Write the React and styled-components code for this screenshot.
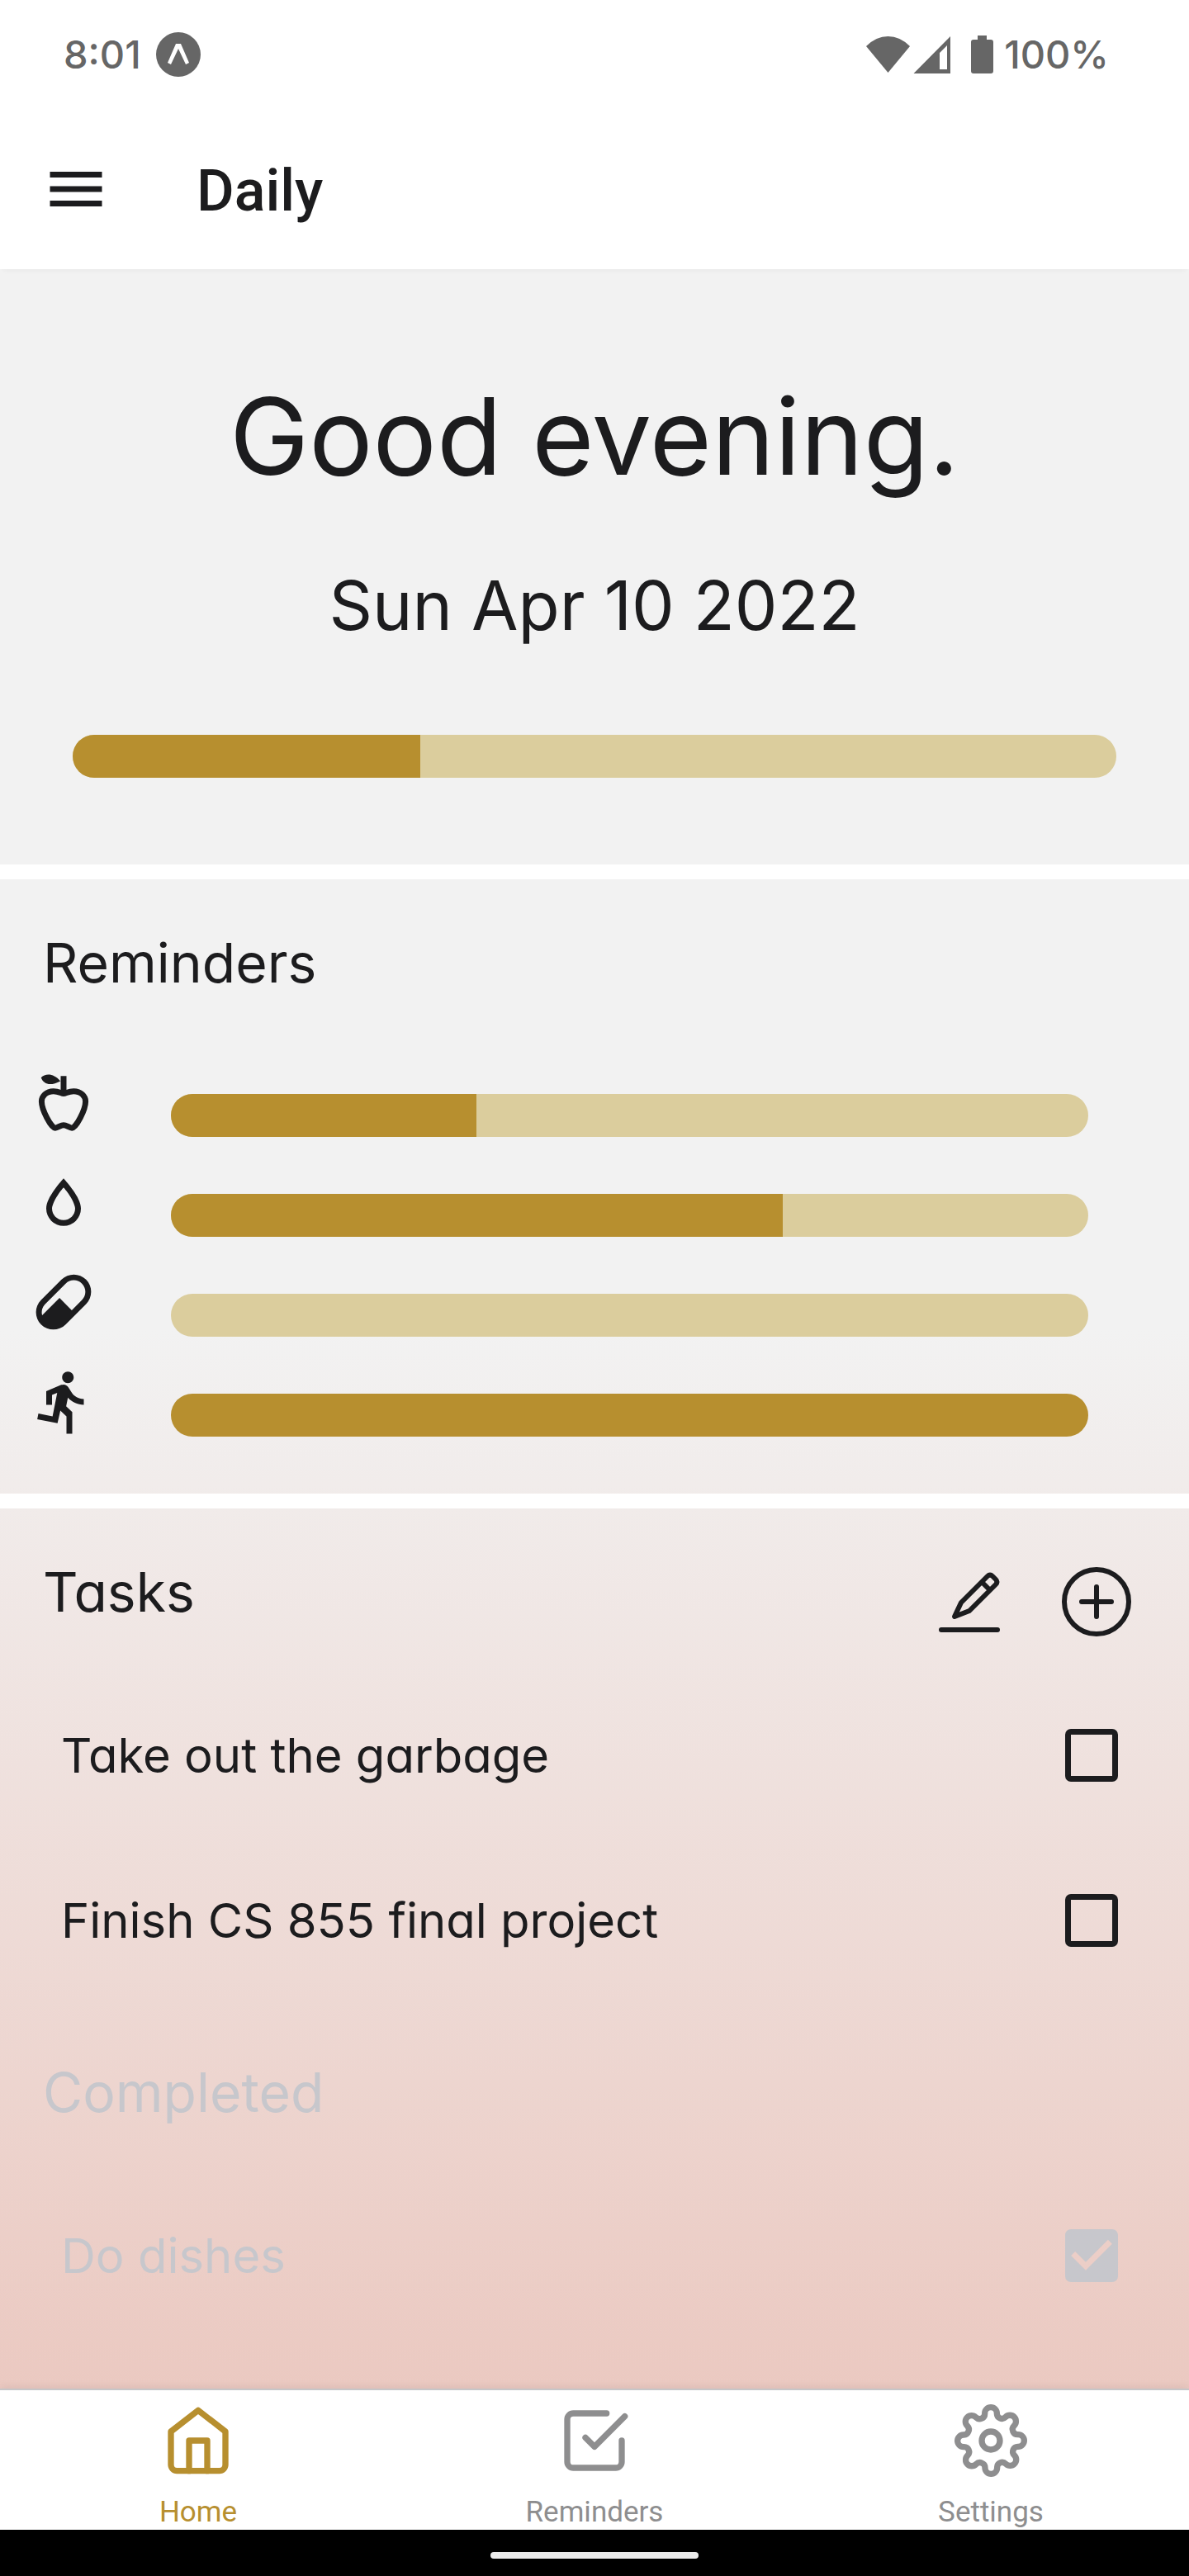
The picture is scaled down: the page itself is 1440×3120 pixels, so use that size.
import React, { useState } from "react";
import styled, { createGlobalStyle } from "styled-components";
import { FiHome, FiCheckSquare, FiSettings } from "react-icons/fi";

const ink = "#1c1c1e";
const gold = "#b78f2f";
const sand = "#dbcd9d";
const muted = "#c7c7cc";
const grey = "#8e8e8f";
const statusGrey = "#666666";

const GlobalStyle = createGlobalStyle`
  *, *::before, *::after { box-sizing: border-box; }
  body { margin: 0; background: #fff; }
  button, input { margin: 0; padding: 0; border: 0; background: none; font: inherit; color: inherit; }
  h1, h2, p, ul { margin: 0; padding: 0; font-weight: inherit; }
  ul { list-style: none; }
  svg { display: block; }
`;

const Screen = styled.div`
  display: flex;
  flex-direction: column;
  min-height: 100vh;
  color: ${ink};
  font-family: Inter, "Liberation Sans", sans-serif;
  font-weight: 400;
  font-feature-settings: "cv11";
`;

const StatusBar = styled.div`
  display: flex;
  align-items: center;
  justify-content: space-between;
  height: 132px;
  padding: 0 97px 0 77px;
  color: ${statusGrey};
  font-size: 47px;
  line-height: 56px;
  font-weight: 500;
`;

const StatusGroup = styled.div`
  display: flex;
  align-items: center;
  gap: ${(p) => p.$gap}px;
`;

const AppBar = styled.header`
  display: flex;
  align-items: center;
  gap: 104px;
  height: 194px;
  padding: 0 50px;
  z-index: 1;
  background: #fff;
  box-shadow: 0 6px 6px -4px rgba(0, 0, 0, 0.04);
`;

const IconButton = styled.button`
  display: block;
  width: 84px;
  height: 84px;
  cursor: pointer;
`;

const ScreenTitle = styled.h1`
  padding-top: 4px;
  font-family: Roboto, sans-serif;
  font-size: 70px;
  line-height: 84px;
  font-weight: 500;
`;

const Main = styled.main`
  display: flex;
  flex-direction: column;
  flex: 1;
  gap: 18px;
  background: linear-gradient(#f2f2f2 50%, #ebc9c1);
`;

const Divider = styled.hr`
  height: 18px;
  margin: -18px 0;
  border: 0;
  background: #fff;
`;

const Hero = styled.section`
  display: flex;
  flex-direction: column;
  align-items: center;
  padding: 122px 88px 105px;
`;

const Greeting = styled.h2`
  font-size: 129px;
  line-height: 160px;
`;

const Today = styled.p`
  margin: 76px 0 106px;
  font-size: 82px;
  line-height: 100px;
`;

const Track = styled.div`
  width: 100%;
  height: 52px;
  overflow: hidden;
  border-radius: 26px;
  background: ${sand};
`;

const Fill = styled.div`
  height: 100%;
  background: ${gold};
`;

const Section = styled.section`
  padding: 61px 0 ${(p) => p.$bottom}px;
`;

const SectionTitle = styled.h2`
  padding-left: 52px;
  font-size: 66px;
  line-height: 80px;
  color: ${(p) => (p.$muted ? muted : ink)};
`;

const ReminderList = styled.ul`
  display: flex;
  flex-direction: column;
  gap: 37px;
  padding: 87px 122px 0 35px;
`;

const ReminderRow = styled.li`
  display: flex;
  align-items: flex-end;
  gap: 88px;

  > svg { flex: none; }
`;

const TaskHeader = styled.div`
  display: flex;
  justify-content: space-between;
  padding-right: 70px;
`;

const Actions = styled.div`
  display: flex;
  gap: 70px;
  padding-top: 10px;
`;

const TaskList = styled.ul`
  padding-top: ${(p) => p.$top}px;
`;

const CompletedTitle = styled(SectionTitle)`
  padding-top: 68px;
`;

const TaskLabel = styled.label`
  display: flex;
  align-items: center;
  justify-content: space-between;
  height: 200px;
  padding: 0 86px 0 74px;
  font-size: 58px;
  line-height: 72px;
  color: ${(p) => (p.$done ? muted : ink)};
  cursor: pointer;
`;

const CheckCell = styled.span`
  display: grid;
  width: 64px;
  height: 64px;

  > * { grid-area: 1 / 1; }
  > svg { pointer-events: none; }
`;

const Checkbox = styled.input`
  appearance: none;
  width: 64px;
  height: 64px;
  border: 7px solid currentColor;
  border-radius: 7px;
  cursor: pointer;

  &:checked { border-color: transparent; }
`;

const TabBar = styled.nav`
  display: grid;
  grid-template-columns: repeat(3, 1fr);
  border-top: 2px solid #c6c6c8;
  background: #fff;
  box-shadow: 0 -2px 10px rgba(0, 0, 0, 0.07);
`;

const Tab = styled.a`
  display: flex;
  flex-direction: column;
  align-items: center;
  gap: 22px;
  padding-top: 17px;
  font-family: Roboto, sans-serif;
  font-size: 35px;
  line-height: 42px;
  text-decoration: none;
  color: ${(p) => (p.$active ? gold : grey)};
`;

const SystemBar = styled.div`
  display: flex;
  justify-content: center;
  height: 56px;
  padding-top: 27px;
  background: #000;
`;

const HomeHandle = styled.div`
  width: 252px;
  height: 8px;
  border-radius: 4px;
  background: #ebebeb;
`;

const Glyph = ({ children }) => (
  <svg width="84" height="84" viewBox="0 0 24 24" fill="currentColor" aria-hidden="true">
    {children}
  </svg>
);

const icons = {
  food: (
    <Glyph>
      <path
        d="M12 9C11.2 9 10.4 8.2 8.5 8.2C6 8.2 4.4 9.9 4.4 11.7C4.4 14.6 7.7 20.9 9.1 20.9C10 20.9 11 19.9 12 19.9C13 19.9 14 20.9 14.9 20.9C16.3 20.9 19.6 14.6 19.6 11.7C19.6 9.9 18 8.2 15.5 8.2C13.6 8.2 12.8 9 12 9Z"
        fill="none"
        stroke="currentColor"
        strokeWidth="2"
      />
      <path d="M11 2.9H13V9H11ZM10.9 4.7C8.6 2 5.8 1.9 4.2 3.5C5.2 6 7.6 6.4 10.9 4.7Z" />
    </Glyph>
  ),
  water: (
    <Glyph>
      <path d="M12,3.77L11.25,4.61C11.25,4.61 9.97,6.06 8.68,7.94C7.39,9.82 6,12.07 6,14.23A6,6 0 0,0 12,20.23A6,6 0 0,0 18,14.23C18,12.07 16.61,9.82 15.32,7.94C14.03,6.06 12.75,4.61 12.75,4.61L12,3.77M12,6.9C12.44,7.42 12.84,7.85 13.68,9.07C14.89,10.83 16,13.07 16,14.23C16,16.45 14.22,18.23 12,18.23C9.78,18.23 8,16.45 8,14.23C8,13.07 9.11,10.83 10.32,9.07C11.16,7.85 11.56,7.42 12,6.9Z" />
    </Glyph>
  ),
  pill: (
    <Glyph>
      <path d="M4.22,11.29L11.29,4.22C13.64,1.88 17.43,1.88 19.78,4.22C22.12,6.56 22.12,10.36 19.78,12.71L12.71,19.78C10.36,22.12 6.56,22.12 4.22,19.78C1.88,17.43 1.88,13.64 4.22,11.29M5.64,12.71C4.59,13.75 4.24,15.24 4.6,16.57L10.59,10.59L14.83,14.83L18.36,11.29C19.93,9.73 19.93,7.2 18.36,5.64C16.8,4.07 14.27,4.07 12.71,5.64L5.64,12.71Z" />
    </Glyph>
  ),
  run: (
    <Glyph>
      <path d="M13.5,5.5C14.59,5.5 15.5,4.58 15.5,3.5C15.5,2.38 14.59,1.5 13.5,1.5C12.39,1.5 11.5,2.38 11.5,3.5C11.5,4.58 12.39,5.5 13.5,5.5M9.89,19.38L10.89,15L13,17V23H15V15.5L12.89,13.5L13.5,10.5C14.79,12 16.79,13 19,13V11C17.09,11 15.5,10 14.69,8.58L13.69,7C13.29,6.38 12.69,6 12,6C11.69,6 11.5,6.08 11.19,6.08L6,8.28V13H8V9.58L9.79,8.88L8.19,17L3.29,16L2.89,18L9.89,19.38Z" />
    </Glyph>
  ),
};

const reminders = [
  { id: "food", label: "Meals", done: 1, total: 3 },
  { id: "water", label: "Water", done: 2, total: 3 },
  { id: "pill", label: "Medication", done: 0, total: 3 },
  { id: "run", label: "Exercise", done: 3, total: 3 },
];

const Progress = ({ label, done, total }) => (
  <Track role="progressbar" aria-label={label} aria-valuenow={done} aria-valuemin={0} aria-valuemax={total}>
    <Fill style={{ width: `${(done / total) * 100}%` }} />
  </Track>
);

const Task = ({ title, done, onToggle }) => (
  <li>
    <TaskLabel $done={done}>
      {title}
      <CheckCell>
        <Checkbox type="checkbox" checked={done} onChange={onToggle} />
        {done && (
          <svg width="64" height="64" viewBox="3 3 18 18" fill="currentColor" aria-hidden="true">
            <path d="M10,17L5,12L6.41,10.58L10,14.17L17.59,6.58L19,8M19,3H5C3.89,3 3,3.89 3,5V19A2,2 0 0,0 5,21H19A2,2 0 0,0 21,19V5C21,3.89 20.1,3 19,3Z" />
          </svg>
        )}
      </CheckCell>
    </TaskLabel>
  </li>
);

export default function App() {
  const [tasks, setTasks] = useState([
    { title: "Take out the garbage", done: false },
    { title: "Finish CS 855 final project", done: false },
    { title: "Do dishes", done: true },
  ]);
  const toggle = (title) =>
    setTasks((all) => all.map((t) => (t.title === title ? { ...t, done: !t.done } : t)));
  const renderTasks = (done) =>
    tasks
      .filter((t) => t.done === done)
      .map((t) => <Task key={t.title} {...t} onToggle={() => toggle(t.title)} />);

  return (
    <Screen>
      <GlobalStyle />
      <StatusBar>
        <StatusGroup $gap={18}>
          <span>8:01</span>
          <svg width="54" height="54" viewBox="0 0 54 54" aria-hidden="true">
            <circle cx="27" cy="27" r="27" fill={statusGrey} />
            <path d="M24 14H30L40 37L36 39L27 20L18 39L14 37Z" fill="#fff" />
          </svg>
        </StatusGroup>
        <StatusGroup $gap={13}>
          <svg width="154" height="48" viewBox="0 0 154 48" fill={statusGrey} aria-hidden="true">
            <path d="M0 14Q12 2 26.500 2Q41 2 53 14L26.500 46Z" />
            <path fillRule="evenodd" d="M102 2V47H57.500ZM98 13L89 22V42H98Z" />
            <path d="M135 1H146V6H151Q154 6 154 9V44Q154 47 151 47H130Q127 47 127 44V9Q127 6 130 6H135Z" />
          </svg>
          <span>100%</span>
        </StatusGroup>
      </StatusBar>

      <AppBar>
        <IconButton type="button" aria-label="Open menu">
          <Glyph>
            <path d="M3,6H21V8H3V6M3,11H21V13H3V11M3,16H21V18H3V16Z" />
          </Glyph>
        </IconButton>
        <ScreenTitle>Daily</ScreenTitle>
      </AppBar>

      <Main>
        <Hero>
          <Greeting>Good evening.</Greeting>
          <Today>Sun Apr 10 2022</Today>
          <Progress label="Day progress" done={1} total={3} />
        </Hero>
        <Divider />
        <Section $bottom={69}>
          <SectionTitle>Reminders</SectionTitle>
          <ReminderList>
            {reminders.map(({ id, ...rest }) => (
              <ReminderRow key={id}>
                {icons[id]}
                <Progress {...rest} />
              </ReminderRow>
            ))}
          </ReminderList>
        </Section>
        <Divider />
        <Section $bottom={61}>
          <TaskHeader>
            <SectionTitle>Tasks</SectionTitle>
            <Actions>
              <IconButton type="button" aria-label="Edit tasks">
                <svg width="84" height="84" viewBox="0 0 84 84" fill="none" stroke="currentColor" strokeWidth="6" strokeLinecap="round" strokeLinejoin="round" aria-hidden="true">
                  <path d="M8 76H76M24 60L32 43L64 11Q67 8 70 11L74 15Q77 18 74 21L42 53ZM57 18L67 28" />
                </svg>
              </IconButton>
              <IconButton type="button" aria-label="Add task">
                <svg width="84" height="84" viewBox="0 0 84 84" fill="none" stroke="currentColor" strokeWidth="6" strokeLinecap="round" aria-hidden="true">
                  <circle cx="42" cy="42" r="39" />
                  <path d="M24 42H60M42 24V60" />
                </svg>
              </IconButton>
            </Actions>
          </TaskHeader>
          <TaskList $top={44}>{renderTasks(false)}</TaskList>
          <CompletedTitle $muted>Completed</CompletedTitle>
          <TaskList $top={58}>{renderTasks(true)}</TaskList>
        </Section>
      </Main>

      <TabBar>
        <Tab href="#home" $active>
          <FiHome size={88} />
          Home
        </Tab>
        <Tab href="#reminders">
          <FiCheckSquare size={88} />
          Reminders
        </Tab>
        <Tab href="#settings">
          <FiSettings size={88} />
          Settings
        </Tab>
      </TabBar>
      <SystemBar>
        <HomeHandle />
      </SystemBar>
    </Screen>
  );
}
